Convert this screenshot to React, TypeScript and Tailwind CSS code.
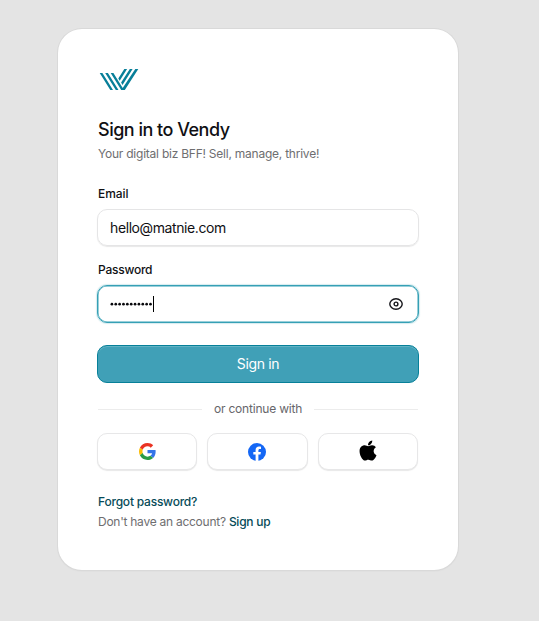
import type { ReactNode } from 'react';
import { FaApple } from 'react-icons/fa';

function Logo() {
  return (
    <svg className="block h-6 w-11 shrink-0" viewBox="0 0 44 24" fill="#087f99">
      <path d="M1.7 5h2.7L15 22h-2.7zM7.2 5h2.7l10.6 17h-2.7z" />
      <path d="M12.7 5h2.7l9.3 14.9L37.3 1H40.3L26.8 22h-3.6z" />
      <path d="M26.3 1h2.8l-7.4 11.7-1.4-2.25zM31.8 1h2.8L24.5 16.9l-1.4-2.3z" />
    </svg>
  );
}

function Google() {
  return (
    <svg className="size-[17px]" viewBox="0 0 48 48">
      <path fill="#ea3323" d="M24 9.5c3.54 0 6.71 1.22 9.21 3.6l6.85-6.85C35.9 2.38 30.47 0 24 0 14.62 0 6.51 5.38 2.56 13.22l7.98 6.19C12.43 13.72 17.74 9.5 24 9.5z" />
      <path fill="#3474e8" d="M46.98 24.55c0-1.57-.15-3.09-.38-4.55H24v9.02h12.94c-.58 2.96-2.26 5.48-4.78 7.18l7.73 6c4.51-4.18 7.09-10.36 7.09-17.65z" />
      <path fill="#fbbc05" d="M10.53 28.59A14.5 14.5 0 0 1 9.77 24c0-1.6.27-3.14.76-4.59l-7.98-6.19A23.99 23.99 0 0 0 0 24c0 3.88.92 7.54 2.56 10.78l7.97-6.19z" />
      <path fill="#299c46" d="M24 48c6.48 0 11.93-2.13 15.89-5.81l-7.73-6c-2.15 1.45-4.92 2.3-8.16 2.3-6.26 0-11.57-4.22-13.47-9.91l-7.98 6.19C6.51 42.62 14.62 48 24 48z" />
    </svg>
  );
}

function Facebook() {
  return (
    <svg className="size-[18px]" viewBox="0 0 24 24">
      <circle cx="12" cy="12" r="12" fill="#1467f5" />
      <path fill="#fff" d="M16.67 15.47 17.2 12h-3.33V9.75c0-.95.47-1.87 1.96-1.87h1.51V4.92s-1.37-.23-2.69-.23c-2.74 0-4.53 1.66-4.53 4.67V12H7.08v3.47h3.04V24h3.75v-8.53z" />
    </svg>
  );
}

function Eye() {
  return (
    <svg className="block size-4" viewBox="0 0 16 16" fill="none" stroke="#17171c" strokeWidth="1.4">
      <path d="M8 2.7C4.2 2.7 1.8 5.5 1.8 8S4.2 13.3 8 13.3 14.2 10.5 14.2 8 11.8 2.7 8 2.7Z" />
      <circle cx="8" cy="8" r="1.9" />
    </svg>
  );
}

function SocialButton({ children, label }: { children: ReactNode; label: string }) {
  return (
    <button aria-label={label} className="flex h-[37px] items-center justify-center rounded-[10px] border border-[#e7e7e8] bg-white shadow-[0_1px_1px_#00000018]">
      {children}
    </button>
  );
}

export default function App() {
  return (
    <main className="h-[621px] bg-[#e4e4e4] pt-[29px] pl-[58px] font-['Inter',sans-serif] text-[#101014]">
      <div className="flex h-[541px] w-[400px] flex-col rounded-3xl bg-white px-10 pt-[39px] shadow-[0_0_0_1px_#d9d9d9,0_1px_2px_#00000010]">
        <Logo />
        <h1 className="mt-[26px] text-[18px] leading-6 font-medium tracking-[-0.5px] whitespace-nowrap">Sign in to Vendy</h1>
        <p className="mt-1 text-[12px] leading-4 tracking-[-0.235px] whitespace-nowrap text-[#6e6e70]">Your digital biz BFF! Sell, manage, thrive!</p>

        <label className="mt-6 text-[12px] leading-4 font-medium tracking-[-0.05px]">Email</label>
        <div className="-mx-px mt-[7px] flex h-[37px] items-center rounded-[10px] border border-[#e5e5e6] px-3 text-[14px] tracking-[-0.4px] shadow-[0_1px_1px_#00000018]">
          hello@matnie.com
        </div>

        <label className="mt-4 text-[12px] leading-4 font-medium tracking-[-0.25px]">Password</label>
        <div className="-mx-px mt-[7px] flex h-[38px] items-center rounded-[10px] border border-[#35a0b5] pr-[14px] pl-3 shadow-[0_0_1px_1px_#35a0b533,inset_0_0_0_0.5px_#35a0b5]">
          <svg className="block h-1 w-[43px]" viewBox="0 0 43 4" fill="#08080c">
            {Array.from({ length: 11 }, (_, i) => (
              <circle key={i} cx={1.9 + i * 3.86} cy="2.2" r="1.35" />
            ))}
          </svg>
          <span className="h-4 w-px bg-black" />
          <span className="ml-auto"><Eye /></span>
        </div>

        <button className="-mx-px mt-[22px] h-[38px] shrink-0 rounded-[10px] border border-[#078099] bg-[#40a0b7] pb-0.5 text-[14px] tracking-[-0.35px] text-white shadow-[inset_0_1px_0_#62b3c4]">Sign in</button>

        <div className="mt-[18px] flex h-4 items-center gap-3 text-[12px] leading-4 tracking-[-0.2px] whitespace-nowrap text-[#66666a]">
          <span className="h-px flex-1 bg-[#ececec]" />
          or continue with
          <span className="h-px flex-1 bg-[#ececec]" />
        </div>

        <div className="-ml-px mt-4 grid grid-cols-3 gap-2.5">
          <SocialButton label="Google"><Google /></SocialButton>
          <SocialButton label="Facebook"><Facebook /></SocialButton>
          <SocialButton label="Apple"><FaApple className="mb-0.5 h-[23px] w-[18px] text-black" /></SocialButton>
        </div>

        <a className="mt-6 text-[12px] leading-4 font-medium tracking-[-0.22px] text-[#064b58]">Forgot password?</a>
        <p className="mt-1 text-[12px] leading-4 tracking-[-0.26px] whitespace-nowrap text-[#6e6e70]">
          Don't have an account? <a className="font-medium text-[#064b58]">Sign up</a>
        </p>
      </div>
    </main>
  );
}
